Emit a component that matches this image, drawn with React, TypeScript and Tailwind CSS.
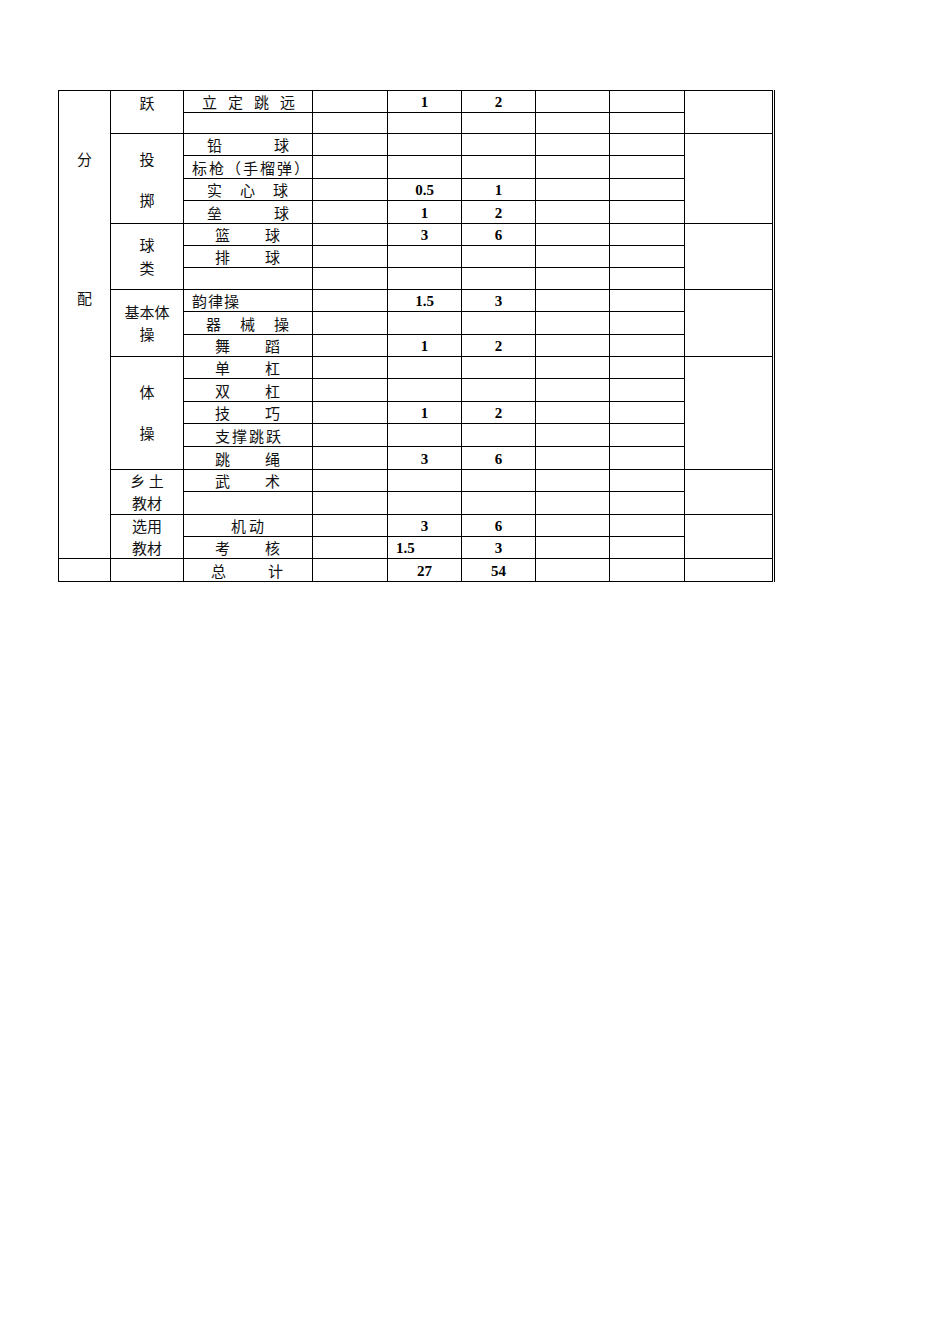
import React from "react";

const ROW_START = [
  "row-start-1", "row-start-2", "row-start-3", "row-start-4", "row-start-5", "row-start-6",
  "row-start-7", "row-start-8", "row-start-9", "row-start-10", "row-start-11", "row-start-12",
  "row-start-13", "row-start-14", "row-start-15", "row-start-16", "row-start-17", "row-start-18",
  "row-start-19", "row-start-20", "row-start-21", "row-start-22",
];

const cjk = "font-['Noto_Sans_CJK_SC',sans-serif] text-[15px] leading-[22px] text-[#111]";
const num = "font-['Liberation_Serif',serif] font-bold text-[15px] leading-none text-black pt-[2px]";

// 项目列: 每个字单独排开，按原表的空格位置
const items: { chars: string[]; cls: string }[] = [
  { chars: ["立", "定", "跳", "远"], cls: "pl-[18px] gap-[11px]" },
  { chars: [], cls: "" },
  { chars: ["铅", "球"], cls: "pl-[23px] gap-[52px]" },
  { chars: ["标枪（手榴弹）"], cls: "pl-[8px] tracking-[2px]" },
  { chars: ["实", "心", "球"], cls: "pl-[23px] gap-[18px]" },
  { chars: ["垒", "球"], cls: "pl-[23px] gap-[52px]" },
  { chars: ["篮", "球"], cls: "pl-[31px] gap-[35px]" },
  { chars: ["排", "球"], cls: "pl-[31px] gap-[35px]" },
  { chars: [], cls: "" },
  { chars: ["韵律操"], cls: "pl-[8px] tracking-[1px]" },
  { chars: ["器", "械", "操"], cls: "pl-[22px] gap-[19px]" },
  { chars: ["舞", "蹈"], cls: "pl-[31px] gap-[35px]" },
  { chars: ["单", "杠"], cls: "pl-[31px] gap-[35px]" },
  { chars: ["双", "杠"], cls: "pl-[31px] gap-[35px]" },
  { chars: ["技", "巧"], cls: "pl-[31px] gap-[35px]" },
  { chars: ["支撑跳跃"], cls: "pl-[31px] tracking-[2px]" },
  { chars: ["跳", "绳"], cls: "pl-[31px] gap-[35px]" },
  { chars: ["武", "术"], cls: "pl-[31px] gap-[35px]" },
  { chars: [], cls: "" },
  { chars: ["机动"], cls: "pl-[47px] tracking-[3px]" },
  { chars: ["考", "核"], cls: "pl-[31px] gap-[35px]" },
  { chars: ["总", "计"], cls: "pl-[27px] gap-[42px]" },
];

const colA: Record<number, string> = {
  1: "1", 5: "0.5", 6: "1", 7: "3", 10: "1.5", 12: "1", 15: "1", 17: "3", 20: "3", 21: "1.5", 22: "27",
};
const colB: Record<number, string> = {
  1: "2", 5: "1", 6: "2", 7: "6", 10: "3", 12: "2", 15: "2", 17: "6", 20: "6", 21: "3", 22: "54",
};

const groups = [
  { pos: "row-start-1 row-span-2", lines: ["跃"], pad: "pt-[1px]", gap: "gap-0" },
  { pos: "row-start-3 row-span-4", lines: ["投", "掷"], pad: "pt-[14px]", gap: "gap-[19px]" },
  { pos: "row-start-7 row-span-3", lines: ["球", "类"], pad: "pt-[10px]", gap: "gap-[1px]" },
  { pos: "row-start-10 row-span-3", lines: ["基本体", "操"], pad: "pt-[11px]", gap: "gap-0" },
  { pos: "row-start-13 row-span-5", lines: ["体", "操"], pad: "pt-[24px]", gap: "gap-[19px]" },
  { pos: "row-start-18 row-span-2", lines: ["乡 土", "教材"], pad: "pt-0", gap: "gap-0" },
  { pos: "row-start-20 row-span-2", lines: ["选用", "教材"], pad: "pt-0", gap: "gap-0" },
  { pos: "row-start-22 row-span-1", lines: [], pad: "", gap: "" },
];

const lastCol = [
  "row-start-1 row-span-2",
  "row-start-3 row-span-4",
  "row-start-7 row-span-3",
  "row-start-10 row-span-3",
  "row-start-13 row-span-5",
  "row-start-18 row-span-2",
  "row-start-20 row-span-2",
  "row-start-22 row-span-1",
];

export default function App() {
  return (
    <div className="min-h-[1344px] w-[950px] bg-white pl-[58px] pt-[90px]">
      <div className="w-fit border-r border-black bg-white pr-px">
        <div className="grid w-fit gap-px bg-black p-px grid-cols-[51px_72px_128px_74px_73px_73px_73px_74px_87px] grid-rows-[21px_20px_21px_22px_21px_22px_21px_21px_21px_21px_22px_21px_21px_22px_21px_22px_22px_21px_22px_21px_21px_22px]">
          {/* 分配 */}
          <div className={`col-start-1 row-start-1 row-span-21 flex flex-col items-center bg-white pt-[57px] gap-[117px] ${cjk}`}>
            <span>分</span>
            <span>配</span>
          </div>
          <div className="col-start-1 row-start-22 bg-white" />

          {/* 类别 */}
          {groups.map((g, i) => (
            <div key={i} className={`col-start-2 ${g.pos} flex flex-col items-center bg-white ${g.pad} ${g.gap} ${cjk}`}>
              {g.lines.map((l, j) => (
                <span key={j} className="whitespace-pre">{l}</span>
              ))}
            </div>
          ))}

          {/* 项目 + 数值 */}
          {items.map((it, i) => {
            const r = i + 1;
            const rs = ROW_START[i];
            return (
              <React.Fragment key={r}>
                <div className={`col-start-3 ${rs} flex items-center bg-white ${it.cls} ${cjk} leading-none`}>
                  {it.chars.map((c, j) => (
                    <span key={j}>{c}</span>
                  ))}
                </div>
                <div className={`col-start-4 ${rs} bg-white`} />
                <div className={`col-start-5 ${rs} flex items-center bg-white ${r === 21 ? "justify-start pl-[8px]" : "justify-center"} ${num}`}>
                  {colA[r] ?? ""}
                </div>
                <div className={`col-start-6 ${rs} flex items-center justify-center bg-white ${num}`}>
                  {colB[r] ?? ""}
                </div>
                <div className={`col-start-7 ${rs} bg-white`} />
                <div className={`col-start-8 ${rs} bg-white`} />
              </React.Fragment>
            );
          })}

          {lastCol.map((p, i) => (
            <div key={i} className={`col-start-9 ${p} bg-white`} />
          ))}
        </div>
      </div>
    </div>
  );
}
